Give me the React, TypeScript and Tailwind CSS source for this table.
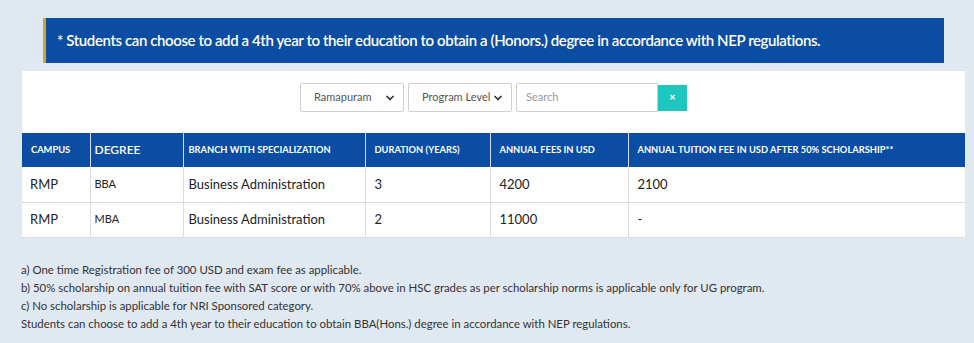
import { ChevronDown } from "lucide-react";

const rows = [
  { campus: "RMP", degree: "BBA", branch: "Business Administration", duration: "3", fees: "4200", after: "2100" },
  { campus: "RMP", degree: "MBA", branch: "Business Administration", duration: "2", fees: "11000", after: "-" },
];

const notes = [
  "a) One time Registration fee of 300 USD and exam fee as applicable.",
  "b) 50% scholarship on annual tuition fee with SAT score or with 70% above in HSC grades as per scholarship norms is applicable only for UG program.",
  "c) No scholarship is applicable for NRI Sponsored category.",
  "Students can choose to add a 4th year to their education to obtain BBA(Hons.) degree in accordance with NEP regulations.",
];

const FilterSelect = ({ label }: { label: string }) => (
  <div className="flex h-[29px] w-[104px] items-center justify-between rounded-[2px] border border-[#cfcfcf] bg-white pl-[13px] pr-[7px] text-[11px] text-[#555]">
    <span>{label}</span>
    <ChevronDown className="h-3 w-3 text-[#333]" strokeWidth={3.5} />
  </div>
);

export default function App() {
  return (
    <div className="min-h-[343px] w-[974px] bg-[#e0e8f1] pt-[18px] font-['Lato','Liberation_Sans',sans-serif]">
      <div className="ml-[43px] mr-[30px] flex h-[45px] items-center border-l-[3px] border-[#c9a630] bg-[#0b4da2] pl-[11px] text-[15px] font-semibold tracking-[-0.4px] text-white">
        * Students can choose to add a 4th year to their education to obtain a (Honors.) degree in accordance with NEP regulations.
      </div>

      <div className="ml-[22px] mr-[9px] mt-[8px] bg-white pt-[12px]">
        <div className="flex justify-center gap-[4px]">
          <FilterSelect label="Ramapuram" />
          <FilterSelect label="Program Level" />
          <div className="flex items-center">
            <div className="flex h-[29px] w-[142px] items-center rounded-l-[2px] border border-[#cfcfcf] pl-[9px] text-[11px] text-[#999]">
              Search
            </div>
            <div className="flex h-[26px] w-[29px] items-center justify-center bg-[#1dc6be] text-[11px] font-bold text-white">
              ×
            </div>
          </div>
        </div>

        <table className="mt-[21px] w-full table-fixed border-collapse">
          <colgroup>
            <col className="w-[68px]" />
            <col className="w-[93px]" />
            <col className="w-[182px]" />
            <col className="w-[125px]" />
            <col className="w-[138px]" />
            <col />
          </colgroup>
          <thead>
            <tr className="h-[34px] bg-[#0b4da2] text-left text-white">
              <th className="border-r border-[#d5dde8] pl-[9px] text-[9.3px] font-bold">CAMPUS</th>
              <th className="border-r border-[#d5dde8] pl-[4px] text-[12px] font-semibold">DEGREE</th>
              <th className="border-r border-[#d5dde8] pl-[5px] text-[9.3px] font-bold">BRANCH WITH SPECIALIZATION</th>
              <th className="border-r border-[#d5dde8] pl-[9px] text-[9.3px] font-bold">DURATION (YEARS)</th>
              <th className="border-r border-[#d5dde8] pl-[9px] text-[9.3px] font-bold">ANNUAL FEES IN USD</th>
              <th className="pl-[9px] text-[9.3px] font-bold">ANNUAL TUITION FEE IN USD AFTER 50% SCHOLARSHIP**</th>
            </tr>
          </thead>
          <tbody>
            {rows.map((r, i) => (
              <tr key={i} className="h-[35px] border-b border-[#dcdcdc] text-[13px] text-[#222]">
                <td className="border-r border-[#dcdcdc] pl-[8px]">{r.campus}</td>
                <td className="border-r border-[#dcdcdc] pl-[4px] text-[11px]">{r.degree}</td>
                <td className="border-r border-[#dcdcdc] pl-[5px]">{r.branch}</td>
                <td className="border-r border-[#dcdcdc] pl-[9px]">{r.duration}</td>
                <td className="border-r border-[#dcdcdc] pl-[9px]">{r.fees}</td>
                <td className="pl-[9px]">{r.after}</td>
              </tr>
            ))}
          </tbody>
        </table>
      </div>

      <div className="mt-[23px] pl-[21px] text-[11.4px] leading-[18px] text-[#333]">
        {notes.map((n, i) => (
          <p key={i}>{n}</p>
        ))}
      </div>
    </div>
  );
}
